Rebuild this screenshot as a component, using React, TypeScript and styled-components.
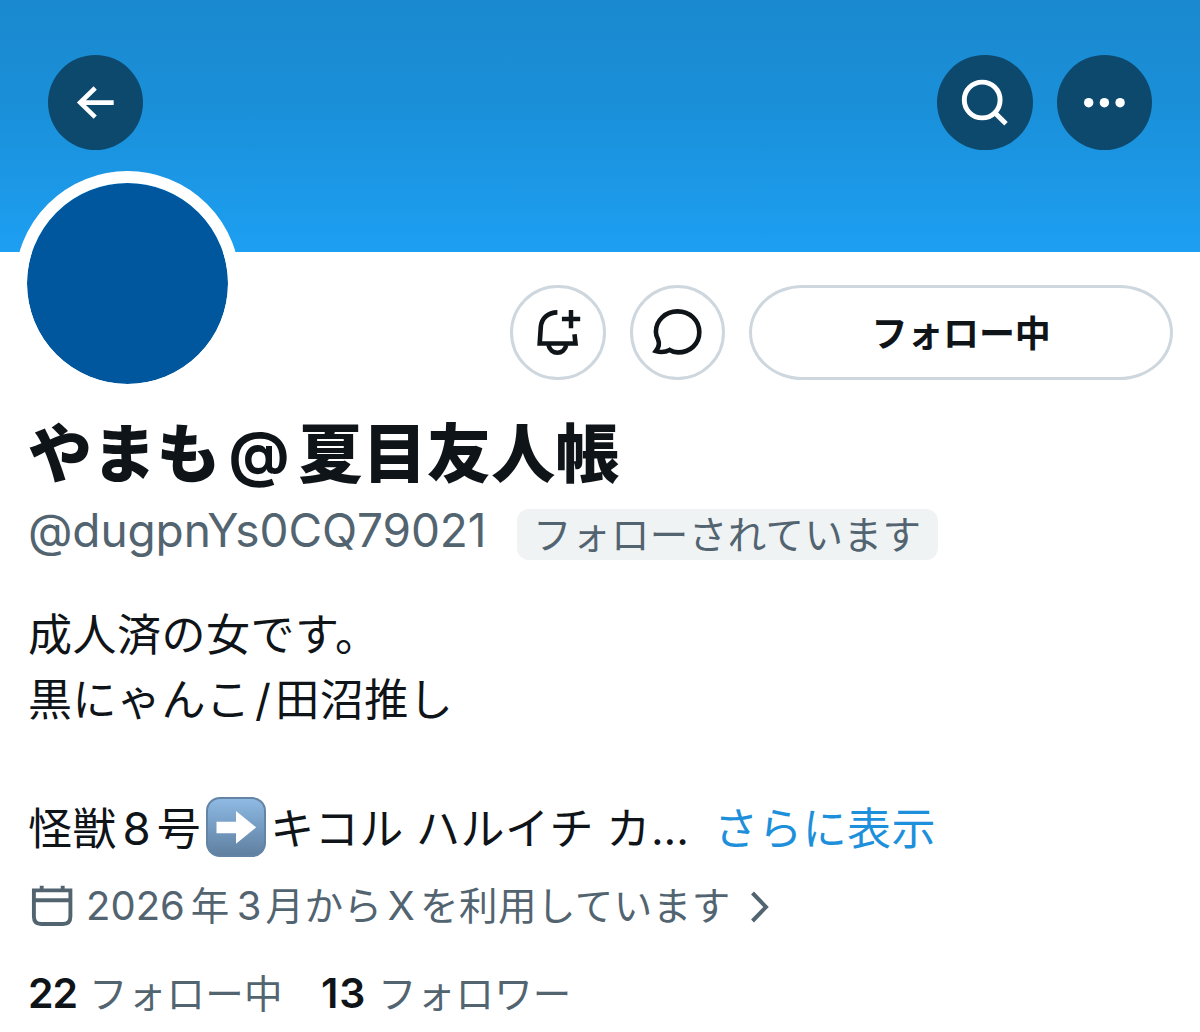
import React from "react";
import styled, { createGlobalStyle } from "styled-components";

const colors = {
  ink: "#0f1419",
  muted: "#536471",
  link: "#1d8fdb",
  outline: "#cfd7de",
  badge: "#eff3f4",
  avatar: "#00579d",
  overlay: "#0d496d",
};

const GlobalStyle = createGlobalStyle`
  * {
    box-sizing: border-box;
  }

  body {
    margin: 0;
    background-color: #fff;
    color: ${colors.ink};
    font-family: "Noto Sans CJK JP", sans-serif;
  }
`;

const Page = styled.main`
  width: 1200px;
  height: 1032px;
  overflow: hidden;
`;

const Banner = styled.header`
  display: flex;
  align-items: flex-start;
  gap: 24px;
  height: 251.5px;
  padding: 54.7px 48px 0;
  background: linear-gradient(#1a89cf, #1a8fd8 40%, #1d9ff2);
`;

const RoundButton = styled.button`
  flex: none;
  width: 95.4px;
  height: 95.4px;
  padding: 0;
  border: none;
  border-radius: 50%;
  background-color: ${colors.overlay};

  &:first-child {
    margin-right: auto;
  }

  svg {
    display: block;
  }
`;

const Actions = styled.section`
  display: flex;
  align-items: flex-start;
  gap: 24px;
  height: 155.5px;
  padding: 33.2px 27px 0 27px;
`;

const Avatar = styled.div`
  position: relative;
  top: -114px;
  left: -12px;
  width: 225px;
  height: 225px;
  margin-right: auto;
  border: 12px solid #fff;
  border-radius: 50%;
  background-color: ${colors.avatar};
  background-clip: padding-box;
`;

const OutlineButton = styled.button<{ $wide?: boolean }>`
  flex: none;
  width: ${({ $wide }) => ($wide ? "424px" : "95.4px")};
  height: 95.4px;
  padding: 0;
  border: 3px solid ${colors.outline};
  border-radius: ${({ $wide }) => ($wide ? "54px / 48px" : "50%")};
  background-color: #fff;
  color: ${colors.ink};
  font: 700 36px/86px "Noto Sans CJK JP", sans-serif;
  letter-spacing: -0.2px;
  ${({ $wide }) => $wide && "padding-bottom: 4px;"}

  svg {
    display: block;
    margin: -3px;
  }
`;

const Details = styled.section`
  padding-left: 28px;
  white-space: pre;
`;

const Name = styled.h1`
  margin: 0;
  height: 84px;
  font-size: 64px;
  font-weight: 900;
  line-height: 84px;
  letter-spacing: 0.2px;
`;

interface LatinProps {
  $before?: number;
  $after?: number;
  $weight?: number;
  $size?: number;
  $lift?: number;
}

const Latin = styled.span<LatinProps>`
  margin-left: ${({ $before = 0 }) => $before}px;
  margin-right: ${({ $after = 0 }) => $after}px;
  font-family: Inter, sans-serif;
  letter-spacing: 0;
  ${({ $weight }) => $weight && `font-weight: ${$weight};`}
  ${({ $size }) => $size && `font-size: ${$size}px;`}
  ${({ $lift }) => $lift && `line-height: 0; vertical-align: ${$lift}px;`}
`;

const HandleRow = styled.div`
  display: flex;
  align-items: center;
  margin-top: 18px;
  height: 51px;
  color: ${colors.muted};
`;

const Handle = styled.div`
  width: 489px;
  height: 51px;
  font: 400 46px/43px Inter, sans-serif;
  letter-spacing: -0.1px;
`;

const Badge = styled.span`
  width: 421px;
  height: 51px;
  padding-left: 16px;
  border-radius: 12px;
  background-color: ${colors.badge};
  font-size: 38.5px;
  line-height: 46px;
  letter-spacing: 0.45px;
`;

const Bio = styled.div`
  margin-top: 40px;
  font-size: 44px;
  line-height: 64.5px;
  letter-spacing: 0.5px;
  word-spacing: 2px;
`;

const BioLine = styled.div`
  display: flex;
  align-items: baseline;
  height: 64.5px;
`;

const MoreLink = styled.a`
  margin-left: 25px;
  color: ${colors.link};
  letter-spacing: 0.4px;
`;

const EmojiTile = styled.svg`
  flex: none;
  align-self: flex-start;
  margin: 3.5px 4.5px 0 4.5px;
`;

const Joined = styled.div`
  display: flex;
  align-items: baseline;
  height: 60px;
  margin-top: 15px;
  color: ${colors.muted};
  font-size: 38.5px;
  line-height: 60px;
  letter-spacing: 0.5px;

  svg {
    flex: none;
    align-self: center;
    margin-top: 8px;
  }

  svg:last-child {
    margin-left: 19px;
  }
`;

const Stats = styled.div`
  display: flex;
  margin-top: 28px;
  color: ${colors.muted};
  font-size: 38.5px;
  line-height: 60px;
  letter-spacing: 0.2px;
`;

const Stat = styled.div<{ $width: number; $track: number }>`
  width: ${({ $width }) => $width}px;

  strong {
    margin-right: 12px;
    color: ${colors.ink};
    font: 600 41px/60px Inter, sans-serif;
    letter-spacing: ${({ $track }) => $track}px;
  }
`;

/* Icons are drawn on the full face of the button that holds them. */
const Face = ({ children }: { children: React.ReactNode }) => (
  <svg width="95.4" height="95.4" viewBox="0 0 95.4 95.4" fill="none" stroke="currentColor" strokeWidth="4.6">
    {children}
  </svg>
);

const BackIcon = () => (
  <Face>
    <path d="M47.2 33 32.2 47.6 47.2 62.2M32.5 47.6H65.7" stroke="#fff" />
  </Face>
);

const SearchIcon = () => (
  <Face>
    <g stroke="#fff" strokeWidth="4.9">
      <circle cx="45.2" cy="45" r="17.9" />
      <path d="M57.6 57.4 69 68.8" />
    </g>
  </Face>
);

const MoreIcon = () => (
  <Face>
    <g fill="#fff" stroke="none">
      <circle cx="31.7" cy="47.7" r="4.7" />
      <circle cx="47.4" cy="47.7" r="4.7" />
      <circle cx="63.1" cy="47.7" r="4.7" />
    </g>
  </Face>
);

const BellPlusIcon = () => (
  <Face>
    <path d="M47.4 27.4C37.8 27.4 31.4 33.6 30.8 42L29.7 58.5H65.5L64.5 49.3" />
    <path d="M38.5 60C39.6 65 43.2 67.8 47.4 67.8S55.2 65 56.3 60" />
    <path d="M61 25V43.2M51.9 34.1H70.2" strokeWidth="4.5" />
  </Face>
);

const ChatIcon = () => (
  <Face>
    <path d="M47.4 26.4C60 26.4 69.3 35.4 69.3 47.2S60 67.4 48 67.4C45 67.4 42 66.5 39.6 65C35.5 67.1 30.5 67.5 25.9 66C29 62 29.8 58.5 28 54.3C26.5 51.7 25.9 49.5 25.9 46.8C25.9 35.4 35.4 26.4 47.4 26.4Z" />
  </Face>
);

const CalendarIcon = () => (
  <svg width="46" height="44" viewBox="0 0 46 44" fill="none" stroke="currentColor" strokeWidth="3.9">
    <path d="M6 15.3H42" />
    <path d="M5.9 5.4H42.4V31.5Q42.4 39 34.9 39H13.4Q5.9 39 5.9 31.5Z" />
    <path d="M13.7 0.7V7M34.7 0.7V7" />
  </svg>
);

const ChevronIcon = () => (
  <svg width="20" height="34" viewBox="0 0 20 34" fill="none" stroke="currentColor" strokeWidth="4">
    <path d="M2.5 3 16 17 2.5 31" />
  </svg>
);

const RightArrowTile = () => (
  <EmojiTile width="60" height="60" viewBox="0 0 60 60" role="img" aria-label="➡️">
    <defs>
      <linearGradient id="tile" x1="0" y1="0" x2="0" y2="1">
        <stop offset="0" stopColor="#91bbe4" />
        <stop offset="0.45" stopColor="#779fc6" />
        <stop offset="1" stopColor="#607f9f" />
      </linearGradient>
    </defs>
    <rect x="1" y="1" width="58" height="58" rx="13" fill="url(#tile)" stroke="#6484a6" strokeWidth="2" />
    <path d="M10.5 24.7H30V14L50.2 30.3 30 46.7V36.3H10.5Z" fill="#fff" />
  </EmojiTile>
);

const App: React.FunctionComponent = () => {
  return (
    <Page>
      <GlobalStyle />
      <Banner>
        <RoundButton aria-label="戻る">
          <BackIcon />
        </RoundButton>
        <RoundButton aria-label="検索">
          <SearchIcon />
        </RoundButton>
        <RoundButton aria-label="もっと見る">
          <MoreIcon />
        </RoundButton>
      </Banner>
      <Actions>
        <Avatar />
        <OutlineButton aria-label="通知">
          <BellPlusIcon />
        </OutlineButton>
        <OutlineButton aria-label="メッセージ">
          <ChatIcon />
        </OutlineButton>
        <OutlineButton $wide>フォロー中</OutlineButton>
      </Actions>
      <Details>
        <Name>
          やまも
          <Latin $before={8} $after={9} $weight={700} $size={60} $lift={2.5}>
            @
          </Latin>
          夏目友人帳
        </Name>
        <HandleRow>
          <Handle>@dugpnYs0CQ79021</Handle>
          <Badge>フォローされています</Badge>
        </HandleRow>
        <Bio>
          <BioLine>成人済の女です。</BioLine>
          <BioLine>
            黒にゃんこ
            <Latin $before={4.5} $after={4.5}>
              /
            </Latin>
            田沼推し
          </BioLine>
          <BioLine />
          <BioLine>
            怪獣
            <Latin $before={5.5} $after={6} $size={45.5}>
              8
            </Latin>
            号
            <RightArrowTile />
            キコル ハルイチ カ<Latin>...</Latin>
            <MoreLink>さらに表示</MoreLink>
          </BioLine>
        </Bio>
        <Joined>
          <CalendarIcon />
          <Latin $before={12} $after={6} $size={40}>
            2026
          </Latin>
          年
          <Latin $before={7} $after={4} $size={40}>
            3
          </Latin>
          月から
          <Latin $before={5} $after={5} $size={40}>
            X
          </Latin>
          を利用しています
          <ChevronIcon />
        </Joined>
        <Stats>
          <Stat $width={293} $track={-1}>
            <strong>22</strong>フォロー中
          </Stat>
          <Stat $width={300} $track={0.8}>
            <strong>13</strong>フォロワー
          </Stat>
        </Stats>
      </Details>
    </Page>
  );
};

export default App;
